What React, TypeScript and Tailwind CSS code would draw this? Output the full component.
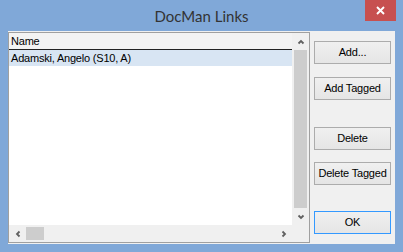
import React from 'react'

function Chevron({ dir }: { dir: 'up' | 'down' | 'left' | 'right' }) {
  const pts = {
    up: '1.5,5.5 4,3 6.5,5.5',
    down: '1.5,2.5 4,5 6.5,2.5',
    left: '5.5,1.5 3,4 5.5,6.5',
    right: '2.5,1.5 5,4 2.5,6.5',
  }[dir]
  return (
    <svg width="8" height="8" viewBox="0 0 8 8">
      <polyline points={pts} fill="none" stroke="#606060" strokeWidth="1.8" />
    </svg>
  )
}

function Btn({ label, className = '', def = false }: { label: string; className?: string; def?: boolean }) {
  return (
    <div
      className={`h-[23px] w-[77px] ml-[4px] flex items-center justify-center border bg-linear-to-b from-[#f0f0f0] to-[#e5e5e5] text-[11px] tracking-[-0.2px] text-black ${
        def ? 'border-[#3399ff]' : 'border-[#acacac]'
      } ${className}`}
    >
      {label}
    </div>
  )
}

export default function App() {
  return (
    <div className="w-[403px] h-[252px] bg-[#80a8d8] flex flex-col font-['Liberation_Sans',Arial,sans-serif] overflow-hidden">
      {/* Title bar */}
      <div className="relative h-[31px] flex items-center justify-center">
        <span className="text-[15px] text-[#333] font-['Lato',sans-serif] pt-[1px]">DocMan Links</span>
        <div className="absolute right-[7px] top-0 w-[31px] h-[21px] bg-[#c75050] flex items-center justify-center">
          <svg width="9" height="9" viewBox="0 0 9 9">
            <path d="M1 1 L8 8 M8 1 L1 8" stroke="#fff" strokeWidth="1.9" />
          </svg>
        </div>
      </div>

      {/* Client area */}
      <div className="flex-1 mx-[8px] mb-[8px] bg-[#f0f0f0] flex">
        {/* List box */}
        <div className="w-[302px] my-[1px] border border-[#a0a0a0] bg-white flex flex-col">
          <div className="flex-1 flex">
            <div className="flex-1 flex flex-col text-[11px] tracking-[-0.2px] text-black">
              <div className="h-[17px] bg-[#f3f3f3] border-b border-[#222] flex items-center pl-[2px]">Name</div>
              <div className="h-[16px] bg-[#d8e5f3] flex items-center pl-[2px]">Adamski, Angelo (S10, A)</div>
            </div>
            <div className="w-[17px] bg-[#f0f0f0] flex flex-col">
              <div className="h-[17px] flex items-center justify-center">
                <Chevron dir="up" />
              </div>
              <div className="flex-1 mx-[2px] bg-[#cdcdcd]" />
              <div className="h-[17px] flex items-center justify-center">
                <Chevron dir="down" />
              </div>
            </div>
          </div>
          <div className="h-[17px] flex">
            <div className="flex-1 bg-[#f0f0f0] flex">
              <div className="w-[17px] flex items-center justify-center">
                <Chevron dir="left" />
              </div>
              <div className="w-[18px] my-[2px] bg-[#cdcdcd]" />
              <div className="flex-1" />
              <div className="w-[17px] flex items-center justify-center">
                <Chevron dir="right" />
              </div>
            </div>
            <div className="w-[17px] bg-[#f0f0f0]" />
          </div>
        </div>

        {/* Buttons */}
        <div className="flex-1 flex flex-col">
          <Btn label="Add..." className="mt-[10px]" />
          <Btn label="Add Tagged" className="mt-[13px]" />
          <Btn label="Delete" className="mt-[27px]" />
          <Btn label="Delete Tagged" className="mt-[12px]" />
          <Btn label="OK" className="mt-[26px]" def />
        </div>
      </div>
    </div>
  )
}
